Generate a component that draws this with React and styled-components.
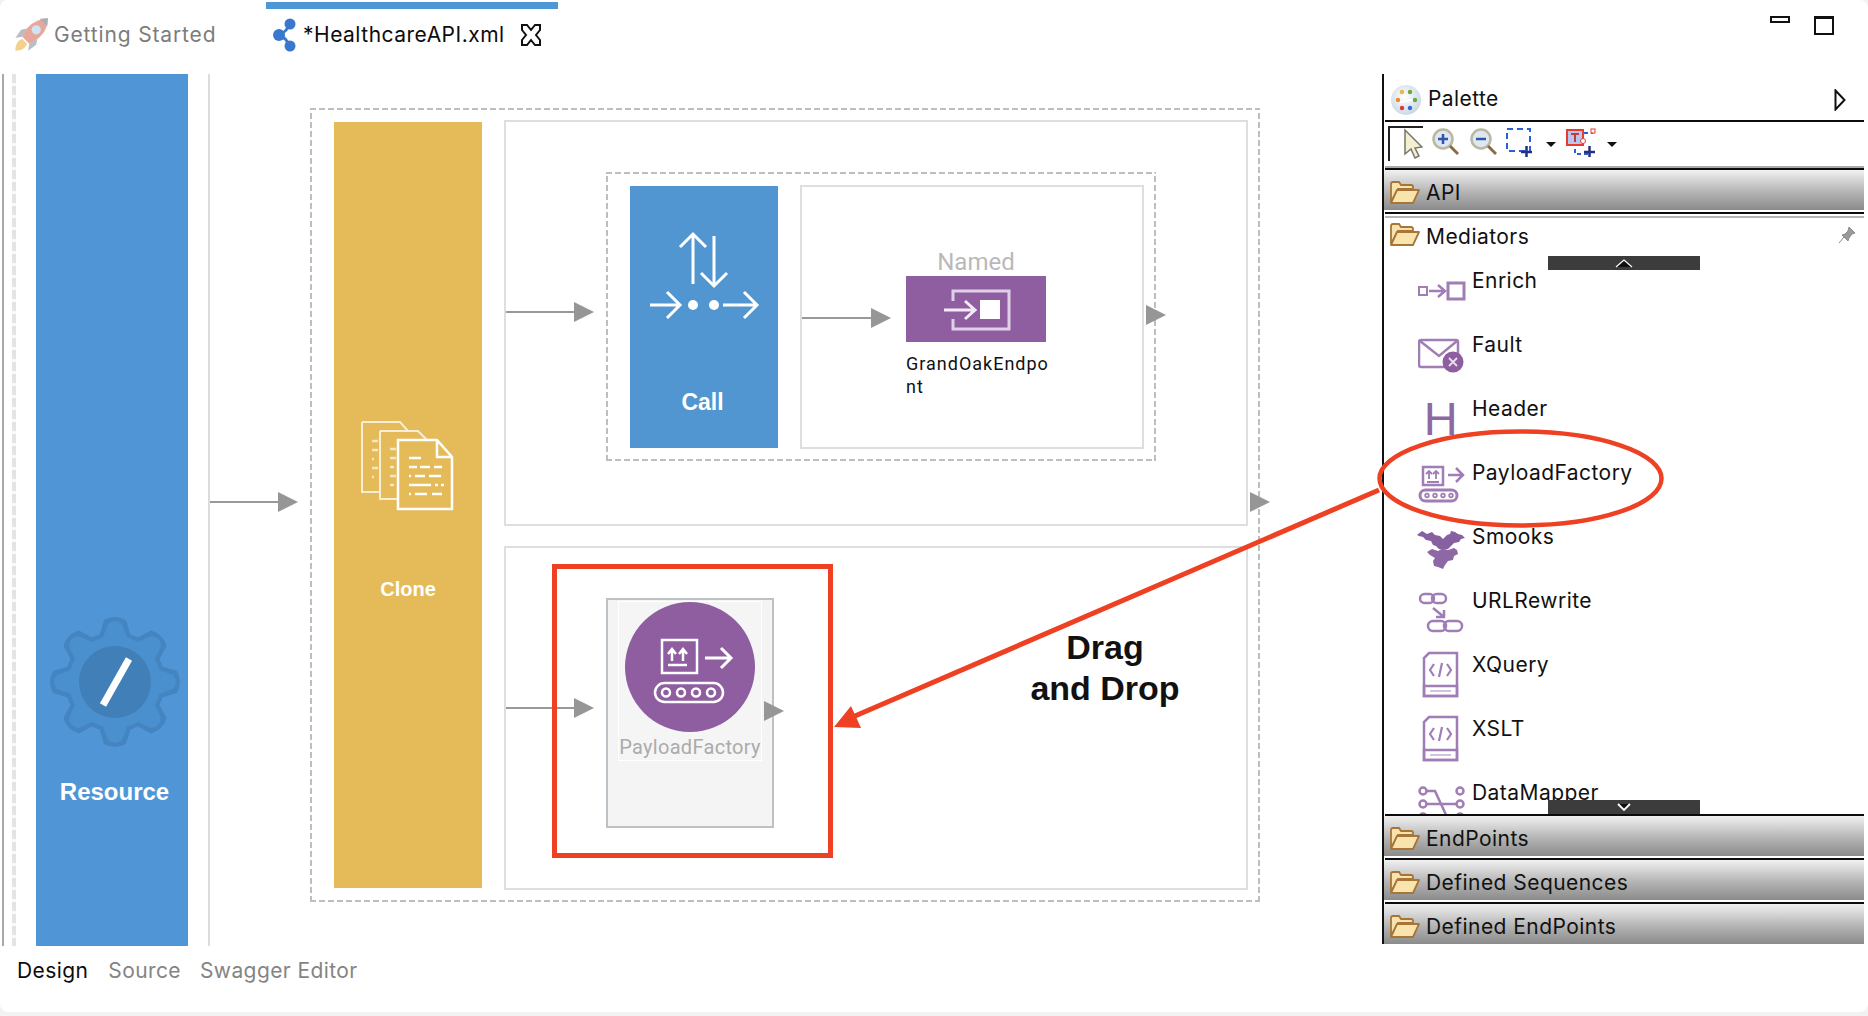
import React from 'react';
import styled, { createGlobalStyle, css } from 'styled-components';

const GlobalStyle = createGlobalStyle`
  * { box-sizing: border-box; }
  html, body { margin: 0; padding: 0; background: #f2f2f2; }
  body { width: 1868px; height: 1016px; overflow: hidden; font-family: Inter, "Liberation Sans", sans-serif; }
`;

const dashedFrame = css`
  background-image:
    repeating-linear-gradient(90deg, #bcbfc2 0 6px, transparent 6px 9px),
    repeating-linear-gradient(90deg, #bcbfc2 0 6px, transparent 6px 9px),
    repeating-linear-gradient(0deg, #bcbfc2 0 6px, transparent 6px 9px),
    repeating-linear-gradient(0deg, #bcbfc2 0 6px, transparent 6px 9px);
  background-position: top left, bottom left, top left, top right;
  background-size: 100% 2px, 100% 2px, 2px 100%, 2px 100%;
  background-repeat: no-repeat;
`;

const Window = styled.div`
  position: relative;
  width: 1868px;
  height: 1012px;
  background: #fff;
  border-radius: 8px;
  display: flex;
  flex-direction: column;
  overflow: hidden;
`;

const TabBar = styled.div`
  height: 74px;
  flex: none;
  display: flex;
  padding-top: 2px;
`;

const Tab = styled.div`
  width: ${(p) => p.$width}px;
  display: flex;
  align-items: center;
  height: 64px;
  padding-left: ${(p) => p.$pad}px;
  border-top: 7px solid ${(p) => (p.$active ? '#4f96d6' : 'transparent')};
`;

const TabLabel = styled.span`
  font-size: 21px;
  letter-spacing: ${(p) => (p.$active ? 0.5 : 0.85)}px;
  margin-left: ${(p) => p.$gap}px;
  color: ${(p) => (p.$active ? '#0c0c0c' : '#7c7c7c')};
  margin-top: -7px;
`;

const WindowControls = styled.div`
  margin-left: auto;
  display: flex;
  gap: 24px;
  padding: 14px 34px 0 0;
  align-items: flex-start;
`;

const MinimizeBox = styled.div`
  width: 20px;
  height: 7px;
  border: 2px solid #111;
`;

const MaximizeBox = styled.div`
  width: 20px;
  height: 19px;
  border: 2px solid #111;
  border-top-width: 3px;
`;

const Body = styled.div`
  height: 872px;
  flex: none;
  display: flex;
`;

const Canvas = styled.div`
  width: 1382px;
  flex: none;
  display: flex;
  align-items: flex-start;
`;

const Sash = styled.div`
  width: 36px;
  height: 100%;
  flex: none;
  margin-left: 0;
  background:
    linear-gradient(#a9a9a9, #a9a9a9) 2px 0 / 2px 100% no-repeat,
    repeating-linear-gradient(180deg, #e4e4e4 0 9px, #fafafa 9px 12px) 12px 0 / 4px 100% no-repeat;
`;

const ResourceBlock = styled.div`
  width: 152px;
  height: 100%;
  flex: none;
  background: #5096d6;
  display: flex;
  flex-direction: column;
  align-items: center;
  padding-top: 541px;
`;

const BlockLabel = styled.div`
  font-family: "Liberation Sans", Arial, sans-serif;
  font-weight: 700;
  color: #fff;
  font-size: ${(p) => p.$size}px;
  line-height: 28px;
  margin-top: ${(p) => p.$top}px;
  margin-left: ${(p) => p.$left || 0}px;
`;

const Divider = styled.div`
  width: 2px;
  height: 100%;
  flex: none;
  margin-left: 20px;
  background: #dcdcdc;
`;

const Connector = styled.div`
  display: flex;
  align-items: center;
  flex: none;
  width: ${(p) => p.$width || 88}px;
  height: 20px;
  margin-top: ${(p) => p.$top}px;
`;

const ConnectorLine = styled.div`
  flex: 1;
  height: 2px;
  background: #999;
`;

const ArrowHead = styled.div`
  width: 0;
  height: 0;
  flex: none;
  border-left: 20px solid #969696;
  border-top: 10px solid transparent;
  border-bottom: 10px solid transparent;
`;

const FloatingHead = styled(ArrowHead)`
  position: absolute;
  left: ${(p) => p.$left}px;
  top: ${(p) => p.$top}px;
`;

const Sequence = styled.div`
  ${dashedFrame}
  position: relative;
  width: 950px;
  height: 794px;
  flex: none;
  margin: 34px 0 0 12px;
  padding: 14px 0 0 24px;
  display: flex;
`;

const CloneBlock = styled.div`
  width: 148px;
  height: 766px;
  flex: none;
  background: #e5ba58;
  display: flex;
  flex-direction: column;
  align-items: center;
  padding-top: 299px;
`;

const Branches = styled.div`
  display: flex;
  flex-direction: column;
  gap: 20px;
  margin: -2px 0 0 22px;
`;

const Branch = styled.div`
  width: 744px;
  height: ${(p) => p.$height}px;
  border: 2px solid #dedede;
  display: flex;
  align-items: flex-start;
`;

const CallGroup = styled.div`
  ${dashedFrame}
  position: relative;
  width: 550px;
  height: 289px;
  flex: none;
  margin: 50px 0 0 12px;
  padding: 14px 0 0 24px;
  display: flex;
  align-items: flex-start;
`;

const CallBlock = styled.div`
  width: 148px;
  height: 262px;
  flex: none;
  background: #5196d0;
  display: flex;
  flex-direction: column;
  align-items: center;
  padding-top: 40px;
`;

const EndpointBox = styled.div`
  width: 344px;
  height: 264px;
  flex: none;
  margin: -1px 0 0 22px;
  border: 2px solid #dedede;
  display: flex;
  align-items: flex-start;
`;

const NamedColumn = styled.div`
  width: 150px;
  flex: none;
  margin: 62px 0 0 15px;
`;

const NamedLabel = styled.div`
  width: 140px;
  text-align: center;
  font-family: Roboto, sans-serif;
  font-size: 24px;
  line-height: 27px;
  color: #b9b9b9;
`;

const EndpointTile = styled.div`
  width: 140px;
  height: 66px;
  background: #8e5ea0;
  svg { display: block; }
`;

const EndpointName = styled.div`
  margin-top: 11px;
  font-family: Roboto, sans-serif;
  font-size: 18px;
  letter-spacing: 1px;
  line-height: 22.5px;
  color: #111;
`;

const PayloadBox = styled.div`
  width: 168px;
  height: 230px;
  flex: none;
  margin: 50px 0 0 12px;
  background: #f4f4f4;
  border: 2px solid #bcc1c5;
  display: flex;
  justify-content: center;
  align-items: flex-start;
`;

const PayloadTile = styled.div`
  width: 144px;
  height: 160px;
  margin-top: 1px;
  background: #f5f5f5;
  border: 1px solid #fff;
  display: flex;
  flex-direction: column;
  align-items: center;
  svg { display: block; flex: none; }
`;

const PayloadLabel = styled.div`
  font-family: Roboto, sans-serif;
  font-size: 20px;
  letter-spacing: 0.3px;
  line-height: 24px;
  margin-top: 3px;
  color: #ababab;
`;

const Palette = styled.div`
  width: 482px;
  flex: none;
  height: 870px;
  border-left: 2px solid #111;
  display: flex;
  flex-direction: column;
`;

const PaletteHeader = styled.div`
  height: 46px;
  flex: none;
  display: flex;
  align-items: center;
  padding: 2px 18px 0 7px;
  gap: 7px;
  font-size: 21px;
  letter-spacing: 0.4px;
  color: #111;
`;

const CollapseHandle = styled.svg`
  margin-left: auto;
  margin-top: 4px;
`;

const Rule = styled.div`
  height: 2px;
  flex: none;
  margin: ${(p) => p.$gap || 0}px 0 0 1px;
  background: ${(p) => p.$color || '#0c0c0c'};
`;

const Toolbar = styled.div`
  height: 44px;
  flex: none;
  display: flex;
  align-items: flex-start;
  padding: 4px 0 0 4px;
`;

const SelectTool = styled.div`
  width: 35px;
  height: 35px;
  flex: none;
  border-top: 2px solid #222;
  border-left: 2px solid #222;
  display: flex;
  justify-content: flex-end;
`;

const ToolIcon = styled.svg`
  flex: none;
  margin-left: ${(p) => p.$left}px;
  margin-top: 2px;
`;

const Drawer = styled.div`
  height: 40px;
  flex: none;
  display: flex;
  align-items: center;
  gap: 6px;
  padding: 4px 0 0 6px;
  font-size: 21px;
  letter-spacing: 0.45px;
  color: #111;
  background: linear-gradient(#f1f1f1 0%, #b4b4b4 55%, #8b8b8b 100%);
`;

const MediatorSection = styled.div`
  position: relative;
  height: 596px;
  flex: none;
  overflow: hidden;
`;

const OpenDrawerHead = styled.div`
  height: 48px;
  display: flex;
  align-items: flex-start;
  gap: 6px;
  padding: 5px 8px 0 6px;
  font-size: 21px;
  letter-spacing: 0.45px;
  line-height: 28px;
  color: #111;
`;

const PinIcon = styled.svg`
  margin: 3px 0 0 auto;
`;

const PaletteRow = styled.div`
  height: 64px;
  display: flex;
  align-items: flex-start;
  padding-left: 34px;
  gap: 6px;
  font-size: 21px;
  letter-spacing: 0.45px;
  line-height: 30px;
  color: #111;
`;

const ScrollButton = styled.div`
  position: absolute;
  left: 164px;
  width: 152px;
  height: 14px;
  background: #3c3c3c;
  display: flex;
  align-items: center;
  justify-content: center;
  ${(p) => (p.$down ? 'bottom: 0;' : 'top: 38px;')}
`;

const BottomTabs = styled.div`
  height: 66px;
  flex: none;
  display: flex;
  align-items: flex-start;
  padding: 10px 0 0 17px;
  font-size: 21px;
  letter-spacing: 0.4px;
  line-height: 30px;
`;

const BottomTab = styled.div`
  margin-right: ${(p) => p.$gap}px;
  color: ${(p) => (p.$active ? '#0c0c0c' : '#848484')};
`;

const RedFrame = styled.div`
  position: absolute;
  left: 552px;
  top: 564px;
  width: 281px;
  height: 294px;
  border: 5px solid #ee4023;
`;

const DragNote = styled.div`
  position: absolute;
  left: 1005px;
  top: 627px;
  width: 200px;
  text-align: center;
  font-family: "Liberation Sans", Arial, sans-serif;
  font-weight: 700;
  font-size: 34px;
  line-height: 41px;
  color: #111;
`;

const Annotation = styled.svg`
  position: absolute;
  left: 0;
  top: 0;
  pointer-events: none;
`;

const ROCKET = (
  <svg width="36" height="36" viewBox="2 1 31 31" style={{ marginTop: -6, flex: 'none' }}>
    <path d="M4 30c0-5 2-9 6-10l4 4c-1 4-5 6-10 6z" fill="#f2d28a" />
    <path d="M10 18C13 9 21 3 32 2c0 11-7 18-16 22z" fill="#e8a79c" />
    <path d="M10 18l-6 1 5-7 5-1zM16 24l-1 6 7-5 1-5z" fill="#b9bdc4" />
    <path d="M25 2.500l7-.5-.5 7z" fill="#a9adb5" />
    <circle cx="22" cy="12" r="4" fill="#cfe4f3" />
  </svg>
);

const FLOW_ICON = (
  <svg width="26" height="34" viewBox="0 0 26 34" style={{ marginTop: -6, flex: 'none' }}>
    <path d="M8 16Q15 14 17 6M8 18Q15 20 17 28" stroke="#3a78cf" strokeWidth="3" fill="none" />
    <circle cx="18" cy="6" r="5.500" fill="#3a78cf" />
    <circle cx="7" cy="17" r="6" fill="#3a78cf" />
    <circle cx="18" cy="28" r="5.500" fill="#3a78cf" />
  </svg>
);

const CLOSE_ICON = (
  <svg width="22" height="22" viewBox="0 0 22 22" style={{ marginLeft: 15, marginTop: -6 }}>
    <path d="M2 1h5l4 5 4-5h5v5l-4 5 4 5v5h-5l-4-5-4 5H2v-5l4-5-4-5z" fill="#fff" stroke="#111" strokeWidth="2" />
  </svg>
);

const GEAR_TEETH = [0, 45, 90, 135, 180, 225, 270, 315];

const Tooth = ({ deg, fill, grow }) => (
  <path
    d={`M${-17 - grow} -42 L${-11 - grow} ${-62 - grow} Q0 ${-68 - grow} ${11 + grow} ${-62 - grow} L${17 + grow} -42z`}
    fill={fill}
    transform={`rotate(${deg})`}
  />
);

const ResourceGear = () => (
  <svg width="132" height="134" viewBox="-66 -67 132 134" style={{ marginLeft: 5, flex: 'none' }}>
    {GEAR_TEETH.map((deg) => (
      <Tooth key={deg} deg={deg} fill="#4485c1" grow={0} />
    ))}
    <circle r="50" fill="#4485c1" />
    {GEAR_TEETH.map((deg) => (
      <Tooth key={deg} deg={deg} fill="#4a8fce" grow={-4} />
    ))}
    <circle r="46" fill="#4a8fce" />
    <circle r="36" fill="#417fb8" />
    <path d="M14-23L-12 23" stroke="#fff" strokeWidth="7" />
  </svg>
);

const CloneIcon = () => (
  <svg width="94" height="90" viewBox="0 0 94 90" style={{ marginLeft: -2, flex: 'none' }}>
    <g fill="none" stroke="#fff" strokeWidth="2" opacity="0.75">
      <path d="M2 1h38l8 9M2 1v70h18" />
      <path d="M20 10h38l10 10M20 10v68h18" />
    </g>
    <path d="M38 19h39l15 17v52H38zM77 19v17h15" fill="#e5ba58" stroke="#fff" strokeWidth="2.500" />
    <path d="M49 37h12M49 46h8m3 0h10m4 0h8M49 55h2m4 0h10m4 0h12M49 64h22m4 0h3m3 0h3M49 73h2m4 0h12m5 0h10" stroke="#fff" strokeWidth="2.500" />
    <path d="M12 20h6M12 29h6M12 38h2M12 47h6M12 56h2M30 28h6M30 37h6M30 46h4M30 55h6M30 64h4" stroke="#fff" strokeWidth="2.500" opacity="0.65" />
  </svg>
);

const CallIcon = () => (
  <svg width="148" height="100" viewBox="0 0 148 100" style={{ flex: 'none' }}>
    <g stroke="#fff" strokeWidth="3" fill="none">
      <path d="M63 58V8M50 21L63 8l13 13" />
      <path d="M84 10v50M71 47l13 13 13-13" />
      <path d="M20 79h30M37 66l13 13-13 13" />
      <path d="M93 79h34M114 66l13 13-13 13" />
    </g>
    <circle cx="63" cy="79" r="5" fill="#fff" />
    <circle cx="84" cy="79" r="5" fill="#fff" />
  </svg>
);

const EndpointIcon = () => (
  <svg width="140" height="66" viewBox="0 0 140 66">
    <path d="M47 25V15h56v38H47V43" fill="none" stroke="#dfd0e6" strokeWidth="3" />
    <rect x="74" y="24" width="20" height="19" fill="#fff" />
    <path d="M38 34h31M59 25l10 9-10 9" fill="none" stroke="#f2ebf5" strokeWidth="3" />
  </svg>
);

const PayloadCircle = () => (
  <svg width="130" height="130" viewBox="0 0 130 130">
    <circle cx="65" cy="65" r="65" fill="#8e5ea0" />
    <g fill="none" stroke="#fff">
      <rect x="37" y="38" width="35" height="33" strokeWidth="2.500" />
      <path d="M47 59V48M43 52l4-5 4 5M58 59V48M54 52l4-5 4 5M43 63h19" strokeWidth="2.500" />
      <path d="M80 56h26M96 46l10 10-10 10" strokeWidth="3" />
      <rect x="30" y="81" width="68" height="19" rx="9.500" strokeWidth="2.500" />
      <circle cx="41" cy="90.500" r="4" strokeWidth="2.500" />
      <circle cx="56" cy="90.500" r="4" strokeWidth="2.500" />
      <circle cx="71" cy="90.500" r="4" strokeWidth="2.500" />
      <circle cx="86" cy="90.500" r="4" strokeWidth="2.500" />
    </g>
  </svg>
);

const PaletteBall = () => (
  <svg width="30" height="30" viewBox="0 0 30 30" style={{ flex: 'none', marginTop: 3 }}>
    <defs>
      <radialGradient id="ball" cx="0.45" cy="0.4" r="0.7">
        <stop offset="0" stopColor="#fff" />
        <stop offset="1" stopColor="#c2d2e0" />
      </radialGradient>
    </defs>
    <circle cx="15" cy="15" r="15" fill="url(#ball)" />
    <circle cx="11" cy="7" r="2.200" fill="#f0b23a" />
    <circle cx="19" cy="7" r="2.200" fill="#6aa83a" />
    <circle cx="7" cy="15" r="2.200" fill="#ef8a2a" />
    <circle cx="24" cy="15" r="2.200" fill="#6aa83a" />
    <circle cx="11" cy="23" r="2.200" fill="#dd3b3b" />
    <circle cx="19" cy="23" r="2.200" fill="#2f6fd6" />
    <path d="M9 17l12-2" stroke="#fff" strokeWidth="2" />
  </svg>
);

const Folder = () => (
  <svg width="30" height="23" viewBox="0 0 30 23" style={{ flex: 'none' }}>
    <path d="M1 21V3q0-2 2-2h6l2 3h10q2 0 2 2v2H8z" fill="#f8e3ae" stroke="#a87539" strokeWidth="1.800" />
    <path d="M1 22L7 9h22l-6 13z" fill="#f9e4ae" stroke="#a87539" strokeWidth="1.800" strokeLinejoin="round" />
  </svg>
);

const Caret = ({ left }) => (
  <ToolIcon $left={left} width="10" height="30" viewBox="0 0 10 30">
    <path d="M0 14h10l-5 5z" fill="#111" />
  </ToolIcon>
);

const PURPLE = '#a07db4';

const EnrichIcon = () => (
  <svg width="48" height="50" viewBox="0 0 48 50">
    <g fill="none" stroke={PURPLE}>
      <rect x="1" y="21" width="8" height="8" strokeWidth="2" />
      <path d="M11 25h16M20 19l7 6-7 6" strokeWidth="2.500" />
      <rect x="30" y="17" width="16" height="16" strokeWidth="3" />
    </g>
  </svg>
);

const FaultIcon = () => (
  <svg width="48" height="50" viewBox="0 0 48 50">
    <rect x="1" y="10" width="39" height="27" rx="2" fill="#fff" stroke={PURPLE} strokeWidth="2.500" />
    <path d="M2 11l19 15 18-15" fill="none" stroke={PURPLE} strokeWidth="2.500" />
    <circle cx="35" cy="32" r="10.500" fill="#8e5ea0" />
    <path d="M31 28l8 8M39 28l-8 8" stroke="#e9dff0" strokeWidth="1.800" />
  </svg>
);

const HeaderGlyphBox = styled.svg`
  flex: none;
  margin-top: -6px;
`;

const HeaderIcon = () => (
  <HeaderGlyphBox width="48" height="62" viewBox="0 -6 48 62">
    <text x="23" y="41" textAnchor="middle" fontFamily="'Liberation Sans', sans-serif" fontSize="47" fill="#8e68a4">H</text>
  </HeaderGlyphBox>
);

const PayloadIcon = () => (
  <svg width="48" height="50" viewBox="0 0 48 50">
    <g fill="none" stroke={PURPLE}>
      <rect x="5" y="9" width="20" height="18" strokeWidth="2.500" />
      <path d="M11 21v-8M8 16l3-3 3 3M18 21v-8M15 16l3-3 3 3M9 24h12" strokeWidth="1.800" />
      <path d="M30 17h15M38 10l7 7-7 7" strokeWidth="2.500" />
      <rect x="2" y="32" width="37" height="11" rx="5.500" strokeWidth="3" />
      <circle cx="9" cy="37.500" r="1.800" strokeWidth="1.800" />
      <circle cx="17" cy="37.500" r="1.800" strokeWidth="1.800" />
      <circle cx="25" cy="37.500" r="1.800" strokeWidth="1.800" />
      <circle cx="33" cy="37.500" r="1.800" strokeWidth="1.800" />
    </g>
  </svg>
);

const SmooksIcon = () => (
  <svg width="48" height="50" viewBox="0 0 48 50" style={{ overflow: 'visible', flex: 'none' }}>
    <path d="M-1 13l5-4 5 3 5-2 3 3 5 1 3 3 4-4 3-1 1-3 4 1 3 2 4 1 3 3-4 1-2 3-5 1-3 3-3 3-5 1-4-1-3-3-3-1-2-4-5-1-3-3-4-1z" fill="#8660a0" />
    <path d="M9 30l5-3 6 2 4-2 6 1 6-2 3 2 1 4-4 2-1 4-5 1-3 4-2 4-5-2-4-1-1-5 2-3-5-3z" fill="#8e68a4" />
  </svg>
);

const UrlIcon = () => (
  <svg width="48" height="50" viewBox="0 0 48 50">
    <g fill="none" stroke={PURPLE} strokeWidth="2.500">
      <rect x="2" y="8" width="14" height="9" rx="4.500" />
      <rect x="14" y="8" width="14" height="9" rx="4.500" />
      <path d="M15 22l11 9M26 24v7h-8" />
      <rect x="10" y="35" width="18" height="10" rx="5" />
      <rect x="26" y="35" width="18" height="10" rx="5" />
    </g>
  </svg>
);

const DocIcon = () => (
  <svg width="48" height="50" viewBox="0 0 48 50">
    <g fill="none" stroke={PURPLE}>
      <path d="M6 46V8l5-5h28v43z" strokeWidth="2.500" />
      <rect x="6" y="36" width="33" height="10" strokeWidth="2.500" />
      <path d="M16 14l-4 6 4 6M29 14l4 6-4 6M24 13l-3 14" strokeWidth="2.200" />
      <path d="M12 41h21" strokeWidth="2" stroke="#d4c3dd" />
    </g>
  </svg>
);

const MapperIcon = () => (
  <svg width="48" height="50" viewBox="0 0 48 50">
    <g fill="none" stroke={PURPLE} strokeWidth="2.500">
      <circle cx="5" cy="13" r="3.500" />
      <circle cx="42" cy="13" r="3.500" />
      <circle cx="5" cy="26" r="3.500" />
      <circle cx="42" cy="26" r="3.500" />
      <circle cx="5" cy="39" r="3.500" />
      <circle cx="42" cy="39" r="3.500" />
      <path d="M9 13h8l12 26h9M9 26h29" />
    </g>
  </svg>
);

const MEDIATORS = [
  { name: 'Enrich', Icon: EnrichIcon },
  { name: 'Fault', Icon: FaultIcon },
  { name: 'Header', Icon: HeaderIcon },
  { name: 'PayloadFactory', Icon: PayloadIcon },
  { name: 'Smooks', Icon: SmooksIcon },
  { name: 'URLRewrite', Icon: UrlIcon },
  { name: 'XQuery', Icon: DocIcon },
  { name: 'XSLT', Icon: DocIcon },
  { name: 'DataMapper', Icon: MapperIcon },
];

const DrawerBar = ({ label }) => (
  <Drawer>
    <Folder />
    {label}
  </Drawer>
);

const App = () => (
  <Window>
    <GlobalStyle />
    <TabBar>
      <Tab $width={266} $pad={13}>
        {ROCKET}
        <TabLabel $gap={5}>Getting Started</TabLabel>
      </Tab>
      <Tab $width={292} $pad={6} $active>
        {FLOW_ICON}
        <TabLabel $gap={5} $active>*HealthcareAPI.xml</TabLabel>
        {CLOSE_ICON}
      </Tab>
      <WindowControls>
        <MinimizeBox />
        <MaximizeBox />
      </WindowControls>
    </TabBar>

    <Body>
      <Canvas>
        <Sash />
        <ResourceBlock>
          <ResourceGear />
          <BlockLabel $size={24} $top={29} $left={5}>Resource</BlockLabel>
        </ResourceBlock>
        <Divider />
        <Connector $top={418}>
          <ConnectorLine />
          <ArrowHead />
        </Connector>
        <Sequence>
          <CloneBlock>
            <CloneIcon />
            <BlockLabel $size={20} $top={64}>Clone</BlockLabel>
          </CloneBlock>
          <Branches>
            <Branch $height={406}>
              <Connector $top={180}>
                <ConnectorLine />
                <ArrowHead />
              </Connector>
              <CallGroup>
                <CallBlock>
                  <CallIcon />
                  <BlockLabel $size={23} $top={62} $left={-3}>Call</BlockLabel>
                </CallBlock>
                <EndpointBox>
                  <Connector $top={121} $width={89}>
                    <ConnectorLine />
                    <ArrowHead />
                  </Connector>
                  <NamedColumn>
                    <NamedLabel>Named</NamedLabel>
                    <EndpointTile>
                      <EndpointIcon />
                    </EndpointTile>
                    <EndpointName>GrandOakEndpo<br />nt</EndpointName>
                  </NamedColumn>
                </EndpointBox>
                <FloatingHead $left={540} $top={133} />
              </CallGroup>
            </Branch>
            <Branch $height={344}>
              <Connector $top={150}>
                <ConnectorLine />
                <ArrowHead />
              </Connector>
              <PayloadBox>
                <PayloadTile>
                  <PayloadCircle />
                  <PayloadLabel>PayloadFactory</PayloadLabel>
                </PayloadTile>
              </PayloadBox>
            </Branch>
          </Branches>
          <FloatingHead $left={940} $top={384} />
          <FloatingHead $left={454} $top={593} />
        </Sequence>
      </Canvas>

      <Palette>
        <PaletteHeader>
          <PaletteBall />
          Palette
          <CollapseHandle width="12" height="22" viewBox="0 0 12 22">
            <path d="M1.500 1.500L10.500 11L1.500 20.500z" fill="#fff" stroke="#111" strokeWidth="2" />
          </CollapseHandle>
        </PaletteHeader>
        <Rule />
        <Toolbar>
          <SelectTool>
            <svg width="24" height="33" viewBox="0 0 24 33">
              <path d="M6 2v24l6-5 4 9 4-2-4-8 7-1z" fill="#f3efd0" stroke="#76766a" strokeWidth="1.500" />
            </svg>
          </SelectTool>
          <ToolIcon $left={9} width="27" height="30" viewBox="0 0 27 30">
            <circle cx="11" cy="11" r="9.500" fill="#dfe7f0" stroke="#b9b8a2" strokeWidth="2.500" />
            <path d="M6 11h10M11 6v10" stroke="#2f55b0" strokeWidth="2.500" />
            <path d="M18 18l8 8" stroke="#8a6a45" strokeWidth="3" />
          </ToolIcon>
          <ToolIcon $left={11} width="27" height="30" viewBox="0 0 27 30">
            <circle cx="11" cy="11" r="9.500" fill="#dfe7f0" stroke="#b9b8a2" strokeWidth="2.500" />
            <path d="M6 11h10" stroke="#2f55b0" strokeWidth="2.500" />
            <path d="M18 18l8 8" stroke="#8a6a45" strokeWidth="3" />
          </ToolIcon>
          <ToolIcon $left={9} width="28" height="30" viewBox="0 0 28 30">
            <path d="M1 1h23v22H1z" fill="none" stroke="#2a5fd8" strokeWidth="2" strokeDasharray="6 4" />
            <path d="M15 24h11M20.500 18v11" stroke="#23327f" strokeWidth="2.500" />
          </ToolIcon>
          <Caret left={12} />
          <ToolIcon $left={10} width="30" height="30" viewBox="0 0 30 30">
            <path d="M9 14v12h13M18 5h9" fill="none" stroke="#2a5fd8" strokeWidth="2" strokeDasharray="4 3" />
            <rect x="1" y="2" width="16" height="15" fill="#b9c7ee" stroke="#e63a32" strokeWidth="2" />
            <path d="M5 6h8M9 6v8" stroke="#c23b3b" strokeWidth="2" />
            <circle cx="17" cy="13" r="2.500" fill="#fff" stroke="#e63a32" />
            <rect x="25" y="1" width="4" height="4" fill="#fff" stroke="#e63a32" />
            <path d="M18 24h11M23.500 18v11" stroke="#23327f" strokeWidth="2.500" />
          </ToolIcon>
          <Caret left={11} />
        </Toolbar>
        <Rule $color="#ababab" />
        <Rule />
        <DrawerBar label="API" />
        <Rule $gap={2} />
        <Rule $gap={2} $color="#b4b4b4" />
        <MediatorSection>
          <OpenDrawerHead>
            <Folder />
            Mediators
            <PinIcon width="18" height="18" viewBox="0 0 18 18">
              <path d="M11 1l6 6-3 1-3 4-1 3-6-6 3-1 3-3zM6 11l-5 6" fill="#9a9a9a" stroke="#8c8c8c" />
            </PinIcon>
          </OpenDrawerHead>
          {MEDIATORS.map(({ name, Icon }) => (
            <PaletteRow key={name}>
              <Icon />
              {name}
            </PaletteRow>
          ))}
          <ScrollButton>
            <svg width="18" height="10" viewBox="0 0 18 10">
              <path d="M1 9L9 2l8 7z" fill="#111" />
              <path d="M1 9L9 2l8 7" fill="none" stroke="#fff" strokeWidth="1.200" />
            </svg>
          </ScrollButton>
          <ScrollButton $down>
            <svg width="14" height="8" viewBox="0 0 14 8">
              <path d="M1 1h12L7 7z" fill="#111" />
              <path d="M1 1l6 6 6-6" fill="none" stroke="#fff" strokeWidth="1.800" />
            </svg>
          </ScrollButton>
        </MediatorSection>
        <Rule />
        <DrawerBar label="EndPoints" />
        <Rule $gap={2} />
        <DrawerBar label="Defined Sequences" />
        <Rule $gap={2} />
        <DrawerBar label="Defined EndPoints" />
      </Palette>
    </Body>

    <BottomTabs>
      <BottomTab $active $gap={20}>Design</BottomTab>
      <BottomTab $gap={19}>Source</BottomTab>
      <BottomTab>Swagger Editor</BottomTab>
    </BottomTabs>

    <RedFrame />
    <DragNote>Drag<br />and Drop</DragNote>
    <Annotation width="1868" height="1016" viewBox="0 0 1868 1016">
      <ellipse cx="1520.500" cy="478.500" rx="141" ry="47" fill="none" stroke="#ee4023" strokeWidth="4.500" />
      <path d="M1379 490L848 719" stroke="#ee4023" strokeWidth="5" />
      <path d="M834 727L851 706L861 728z" fill="#ee4023" />
    </Annotation>
  </Window>
);

export default App;
